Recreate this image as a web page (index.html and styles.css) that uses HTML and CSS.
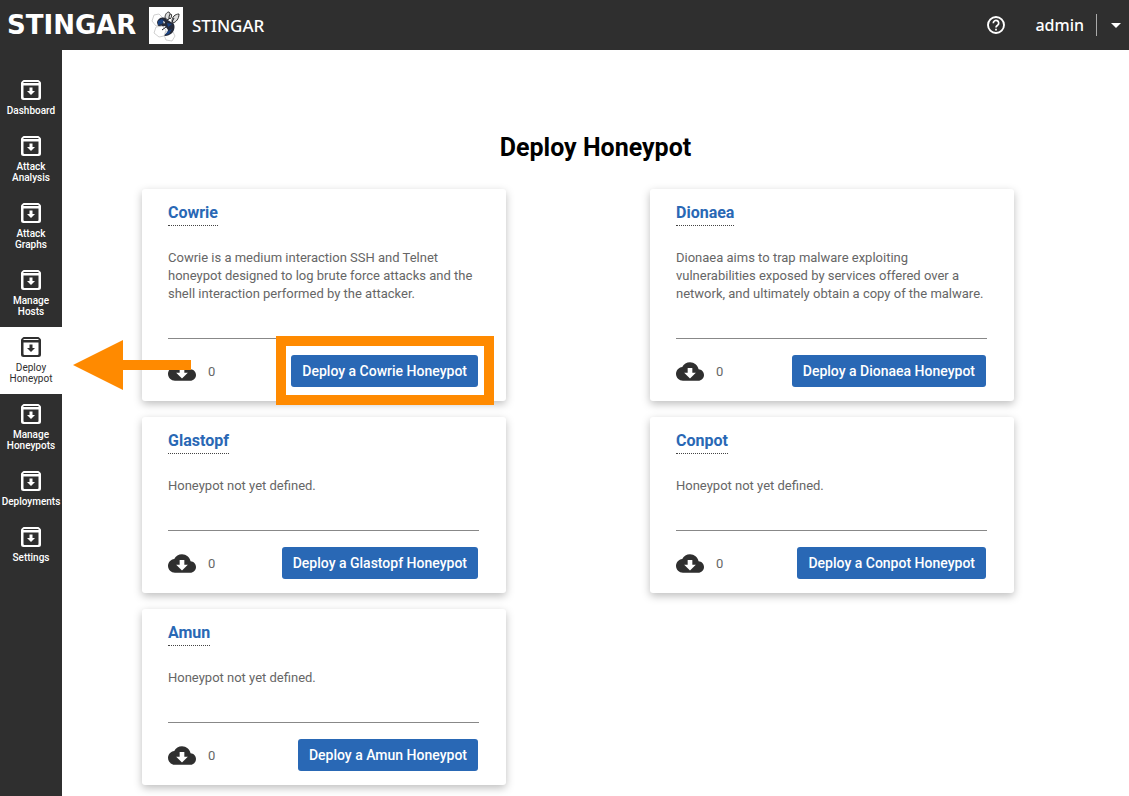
FILE: index.html
```
<!DOCTYPE html>
<html lang="en">
<head>
<meta charset="utf-8">
<meta name="viewport" content="width=device-width, initial-scale=1">
<title>STINGAR - Deploy Honeypot</title>
<link rel="stylesheet" href="styles.css">
</head>
<body>
<svg class="defs" aria-hidden="true">
  <symbol id="archive" viewBox="0 0 20 20">
    <path fill="currentColor" fill-rule="evenodd" d="M3 0h14c1 0 3 2 3 3v14.500q0 2.500-2.500 2.500h-15Q0 20 0 17.500V3c0-1 2-3 3-3zM3 2l-1 1h16l-1-1zM2.500 5.500v11.500q0 1 1 1h13q1 0 1-1V5.500z"/>
    <path fill="currentColor" d="M8.500 7.500h3v3.500H14l-4 4-4-4h2.500z"/>
  </symbol>
  <symbol id="cloud" viewBox="0 4 24 16">
    <path fill="currentColor" d="M19.350 10.040C18.670 6.590 15.640 4 12 4 9.110 4 6.600 5.640 5.350 8.040 2.340 8.360 0 10.910 0 14c0 3.310 2.690 6 6 6h13c2.760 0 5-2.240 5-5 0-2.640-2.050-4.780-4.650-4.960zM17 13l-5 5-5-5h3V9h4v4h3z"/>
  </symbol>
</svg>

<header class="topbar">
  <a class="brand" href="#">
    <span class="wordmark">STINGAR</span>
    <svg class="mascot" viewBox="0 0 34 37" aria-hidden="true">
      <path fill="#fff" d="M0 0h34v37H0z"/>
      <g fill="#fff" stroke="#c4c4c4" stroke-width=".8">
        <path d="M5 8l5-1 4 4-1 6-6 2-4-5z"/>
        <path d="M18 24l6 1 2 4-3 5-6-1-2-5z"/>
      </g>
      <g fill="#ddd" stroke="#333" stroke-width="1">
        <path d="M16 11c0-4 2-6 4-6 2 2 1 5-1 8z"/>
        <path d="M20 11c0-3 1-4 2-4 1 1 1 3-1 5z"/>
        <path d="M23 14c0-4 3-7 7-7 0 5-3 8-6 9z"/>
      </g>
      <path fill="#252a39" d="M8 15c1-4 6-6 9-3l5 3c4 1 4 5 3 8-2 4-5 6-11 6 2-2 5-3 5-6l-3-4-4 1c-2 0-4-2-4-5z"/>
      <path fill="#1b4383" d="M9 14l4-2 2 2-2 3-4 1zM18 16l5 1-4 3zM19 24l4-2-3 5-4 1z"/>
      <path fill="#fff" stroke="#c4c4c4" stroke-width=".8" d="M7 20l6-1 4 4-2 6-5 1-5-4z"/>
      <path stroke="#181c26" d="M17 20l-4 3M23 15l2-4" fill="none"/>
      <path fill="#fff" d="M14 14l2 1-1 2z"/>
    </svg>
    <span class="product">STINGAR</span>
  </a>
  <div class="account">
    <button class="icon-button" aria-label="Help">
      <svg class="help" viewBox="0 0 18 18" fill="none" stroke="currentColor" stroke-width="1.900" aria-hidden="true">
        <circle cx="9" cy="9" r="8"/>
        <path d="M6.300 7.200a2.700 2.700 0 1 1 4.400 2C9.700 10 9 10.300 9 11.600M9 12.800v1.800" stroke-width="1.700"/>
      </svg>
    </button>
    <span class="user">admin</span>
    <button class="icon-button menu-toggle" aria-label="Account menu">
      <svg class="caret" viewBox="0 0 10 5" aria-hidden="true"><path fill="currentColor" d="M0 0h10L5 5z"/></svg>
    </button>
  </div>
</header>

<div class="shell">
  <nav class="sidebar" aria-label="Main">
    <a class="nav-item" href="#"><svg class="nav-icon"><use href="#archive"/></svg>Dashboard</a>
    <a class="nav-item" href="#"><svg class="nav-icon"><use href="#archive"/></svg>Attack<br>Analysis</a>
    <a class="nav-item" href="#"><svg class="nav-icon"><use href="#archive"/></svg>Attack<br>Graphs</a>
    <a class="nav-item" href="#"><svg class="nav-icon"><use href="#archive"/></svg>Manage<br>Hosts</a>
    <a class="nav-item active" href="#" aria-current="page"><svg class="nav-icon"><use href="#archive"/></svg>Deploy<br>Honeypot
      <svg class="arrow" viewBox="0 0 118 50" aria-hidden="true"><path fill="#ff8a00" d="M0 25L50 0v20h68v10H50v20z"/></svg>
    </a>
    <a class="nav-item" href="#"><svg class="nav-icon"><use href="#archive"/></svg>Manage<br>Honeypots</a>
    <a class="nav-item" href="#"><svg class="nav-icon"><use href="#archive"/></svg>Deployments</a>
    <a class="nav-item" href="#"><svg class="nav-icon"><use href="#archive"/></svg>Settings</a>
  </nav>

  <main class="content">
    <h1 class="page-title">Deploy Honeypot</h1>
    <div class="cards">
      <article class="card">
        <h2 class="card-title"><a href="#">Cowrie</a></h2>
        <p class="card-text">Cowrie is a medium interaction SSH and Telnet honeypot designed to log brute force attacks and the shell interaction performed by the attacker.</p>
        <footer class="card-footer">
          <svg class="cloud"><use href="#cloud"/></svg><span class="count">0</span>
          <span class="highlight"><button class="deploy">Deploy a Cowrie Honeypot</button></span>
        </footer>
      </article>
      <article class="card">
        <h2 class="card-title"><a href="#">Dionaea</a></h2>
        <p class="card-text">Dionaea aims to trap malware exploiting vulnerabilities exposed by services offered over a network, and ultimately obtain a copy of the malware.</p>
        <footer class="card-footer">
          <svg class="cloud"><use href="#cloud"/></svg><span class="count">0</span>
          <button class="deploy">Deploy a Dionaea Honeypot</button>
        </footer>
      </article>
      <article class="card">
        <h2 class="card-title"><a href="#">Glastopf</a></h2>
        <p class="card-text">Honeypot not yet defined.</p>
        <footer class="card-footer">
          <svg class="cloud"><use href="#cloud"/></svg><span class="count">0</span>
          <button class="deploy">Deploy a Glastopf Honeypot</button>
        </footer>
      </article>
      <article class="card">
        <h2 class="card-title"><a href="#">Conpot</a></h2>
        <p class="card-text">Honeypot not yet defined.</p>
        <footer class="card-footer">
          <svg class="cloud"><use href="#cloud"/></svg><span class="count">0</span>
          <button class="deploy">Deploy a Conpot Honeypot</button>
        </footer>
      </article>
      <article class="card">
        <h2 class="card-title"><a href="#">Amun</a></h2>
        <p class="card-text">Honeypot not yet defined.</p>
        <footer class="card-footer">
          <svg class="cloud"><use href="#cloud"/></svg><span class="count">0</span>
          <button class="deploy">Deploy a Amun Honeypot</button>
        </footer>
      </article>
    </div>
  </main>
</div>
</body>
</html>
```

FILE: styles.css
```
* { box-sizing: border-box; }

body {
  margin: 0;
  min-height: 100vh;
  display: flex;
  flex-direction: column;
  background: #fff;
  color: #000;
  font-family: Roboto, "Liberation Sans", sans-serif;
}

a { color: inherit; text-decoration: none; }

.defs { display: none; }

.topbar {
  display: flex;
  align-items: center;
  justify-content: space-between;
  height: 50px;
  padding-left: 7px;
  background: #2f2f2f;
  color: #fff;
  font-family: "Noto Sans", sans-serif;
  font-weight: 500;
}

.brand { display: flex; align-items: center; }

.wordmark {
  width: 142px;
  font-family: "DejaVu Sans", sans-serif;
  font-size: 26px;
  font-weight: 700;
  line-height: 32px;
}

.mascot { width: 34px; height: 37px; }

.product { margin-left: 9px; font-size: 17px; }

.account { display: flex; align-items: center; }

.icon-button {
  display: flex;
  padding: 0;
  border: 0;
  background: none;
  color: inherit;
  cursor: pointer;
}

.help { width: 18px; height: 18px; }

.user { margin: 0 12px 0 30px; font-size: 16px; }

.menu-toggle {
  align-items: center;
  height: 22px;
  padding: 0 8px 0 14px;
  border-left: 1px solid #aaa;
}

.caret { width: 10px; height: 5px; }

.shell { display: flex; flex: 1; }

.sidebar {
  flex: 0 0 62px;
  padding-top: 20px;
  background: #2f2f2f;
  color: #fff;
}

.nav-item {
  position: relative;
  display: flex;
  flex-direction: column;
  align-items: center;
  padding: 10px 0;
  font-size: 10px;
  font-weight: 500;
  line-height: 11px;
  text-align: center;
}

.nav-item.active {
  background: #fff;
  color: #2f2f2f;
  font-weight: 400;
}

.nav-icon { width: 20px; height: 20px; margin-bottom: 5px; }

.arrow {
  position: absolute;
  z-index: 1;
  left: 73px;
  top: 13px;
  width: 118px;
  height: 50px;
}

.content { flex: 1; padding: 82px 0 12px; }

.page-title {
  margin: 0 0 26px;
  font-size: 25px;
  font-weight: 700;
  line-height: 31px;
  text-align: center;
}

.cards {
  display: grid;
  grid-template-columns: 1fr 1fr;
  gap: 16px 144px;
  padding: 0 115px 0 80px;
}

.card {
  padding: 14px 27px 14px 26px;
  border-radius: 3px;
  background: #fff;
  box-shadow: 0 3px 8px rgba(0, 0, 0, 0.26);
}

.card-title {
  display: flex;
  margin: 0 0 23px;
  color: #2968b5;
  font-size: 16px;
  font-weight: 700;
  line-height: 20px;
}

.card-title a {
  padding-bottom: 2px;
  border-bottom: 1px dotted #444;
}

.card-text {
  margin: 0;
  padding-bottom: 35px;
  border-bottom: 1px solid #888;
  color: #666;
  font-size: 13px;
  line-height: 18px;
}

.card-footer {
  display: flex;
  align-items: center;
  padding: 16px 1px 0 0;
}

.cloud { width: 28px; height: 19px; color: #2f2f2f; }

.count {
  margin: 0 auto 0 12px;
  color: #666;
  font-size: 13px;
}

.deploy {
  height: 32px;
  padding: 0 11px;
  border: 0;
  border-radius: 3px;
  background: #2968b5;
  color: #fff;
  font-family: Roboto, sans-serif;
  font-size: 14px;
  font-weight: 500;
  cursor: pointer;
}

.highlight { position: relative; }

.highlight::after {
  content: "";
  position: absolute;
  inset: -19px -16px -18px -15px;
  border: 10px solid #ff8a00;
  pointer-events: none;
}
```
